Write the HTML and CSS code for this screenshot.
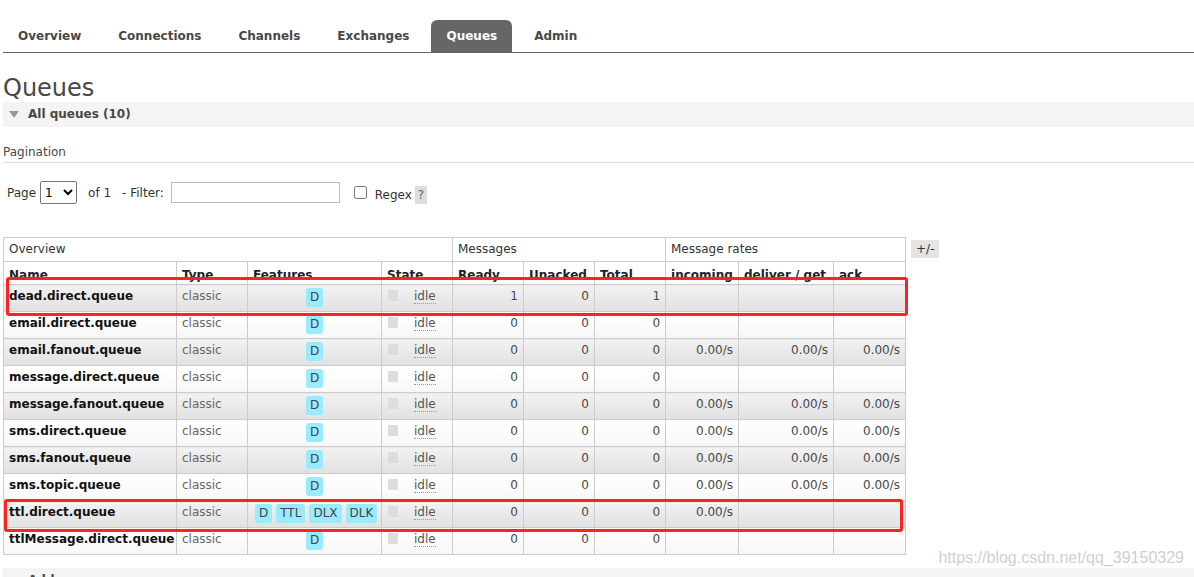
FILE: index.html
```html
<!DOCTYPE html>
<html>
<head>
<meta charset="utf-8">
<link rel="stylesheet" href="styles.css">
</head>
<body>
<div class="page">
  <ul class="tabs">
    <li class="tab">Overview</li>
    <li class="tab">Connections</li>
    <li class="tab">Channels</li>
    <li class="tab">Exchanges</li>
    <li class="tab active">Queues</li>
    <li class="tab">Admin</li>
  </ul>
  <h1 class="title">Queues</h1>
  <div class="section-head"><span class="tri"></span>All queues (10)</div>
  <div class="pag-title">Pagination</div>
  <div class="controls">
    <span class="lbl">Page</span>
    <select class="pg"><option>1</option></select>
    <span class="lbl of">of 1</span>
    <span class="lbl">- Filter:</span>
    <input class="filter" type="text">
    <input class="chk" type="checkbox">
    <span class="lbl regex">Regex</span>
    <span class="help">?</span>
  </div>
  <div class="table-row">
    <div class="table-wrap">
      <table class="queues">
        <colgroup>
          <col style="width:173px"><col style="width:71px"><col style="width:134px"><col style="width:71px">
          <col style="width:71px"><col style="width:71px"><col style="width:71px">
          <col style="width:73px"><col style="width:95px"><col style="width:72px">
        </colgroup>
        <thead>
          <tr class="group">
            <th colspan="4">Overview</th>
            <th colspan="3">Messages</th>
            <th colspan="3">Message rates</th>
          </tr>
          <tr class="cols">
            <th><div class="cut">Name</div></th>
            <th><div class="cut">Type</div></th>
            <th><div class="cut">Features</div></th>
            <th><div class="cut">State</div></th>
            <th><div class="cut">Ready</div></th>
            <th><div class="cut">Unacked</div></th>
            <th><div class="cut">Total</div></th>
            <th><div class="cut">incoming</div></th>
            <th><div class="cut">deliver / get</div></th>
            <th><div class="cut">ack</div></th>
          </tr>
        </thead>
        <tbody>
          <tr class="odd"><td class="name">dead.direct.queue</td><td class="type">classic</td><td class="feat"><span class="badge">D</span></td><td class="state"><span class="sq"></span><span class="idle">idle</span></td><td class="num">1</td><td class="num">0</td><td class="num">1</td><td class="num"></td><td class="num"></td><td class="num"></td></tr>
          <tr class="even"><td class="name">email.direct.queue</td><td class="type">classic</td><td class="feat"><span class="badge">D</span></td><td class="state"><span class="sq"></span><span class="idle">idle</span></td><td class="num">0</td><td class="num">0</td><td class="num">0</td><td class="num"></td><td class="num"></td><td class="num"></td></tr>
          <tr class="odd"><td class="name">email.fanout.queue</td><td class="type">classic</td><td class="feat"><span class="badge">D</span></td><td class="state"><span class="sq"></span><span class="idle">idle</span></td><td class="num">0</td><td class="num">0</td><td class="num">0</td><td class="num">0.00/s</td><td class="num">0.00/s</td><td class="num">0.00/s</td></tr>
          <tr class="even"><td class="name">message.direct.queue</td><td class="type">classic</td><td class="feat"><span class="badge">D</span></td><td class="state"><span class="sq"></span><span class="idle">idle</span></td><td class="num">0</td><td class="num">0</td><td class="num">0</td><td class="num"></td><td class="num"></td><td class="num"></td></tr>
          <tr class="odd"><td class="name">message.fanout.queue</td><td class="type">classic</td><td class="feat"><span class="badge">D</span></td><td class="state"><span class="sq"></span><span class="idle">idle</span></td><td class="num">0</td><td class="num">0</td><td class="num">0</td><td class="num">0.00/s</td><td class="num">0.00/s</td><td class="num">0.00/s</td></tr>
          <tr class="even"><td class="name">sms.direct.queue</td><td class="type">classic</td><td class="feat"><span class="badge">D</span></td><td class="state"><span class="sq"></span><span class="idle">idle</span></td><td class="num">0</td><td class="num">0</td><td class="num">0</td><td class="num">0.00/s</td><td class="num">0.00/s</td><td class="num">0.00/s</td></tr>
          <tr class="odd"><td class="name">sms.fanout.queue</td><td class="type">classic</td><td class="feat"><span class="badge">D</span></td><td class="state"><span class="sq"></span><span class="idle">idle</span></td><td class="num">0</td><td class="num">0</td><td class="num">0</td><td class="num">0.00/s</td><td class="num">0.00/s</td><td class="num">0.00/s</td></tr>
          <tr class="even"><td class="name">sms.topic.queue</td><td class="type">classic</td><td class="feat"><span class="badge">D</span></td><td class="state"><span class="sq"></span><span class="idle">idle</span></td><td class="num">0</td><td class="num">0</td><td class="num">0</td><td class="num">0.00/s</td><td class="num">0.00/s</td><td class="num">0.00/s</td></tr>
          <tr class="odd"><td class="name">ttl.direct.queue</td><td class="type">classic</td><td class="feat"><span class="badge">D</span><span class="badge">TTL</span><span class="badge">DLX</span><span class="badge">DLK</span></td><td class="state"><span class="sq"></span><span class="idle">idle</span></td><td class="num">0</td><td class="num">0</td><td class="num">0</td><td class="num">0.00/s</td><td class="num"></td><td class="num"></td></tr>
          <tr class="even"><td class="name">ttlMessage.direct.queue</td><td class="type">classic</td><td class="feat"><span class="badge">D</span></td><td class="state"><span class="sq"></span><span class="idle">idle</span></td><td class="num">0</td><td class="num">0</td><td class="num">0</td><td class="num"></td><td class="num"></td><td class="num"></td></tr>
        </tbody>
      </table>
      <div class="mark mark1"></div>
      <div class="mark mark2"></div>
    </div>
    <span class="toggle">+/-</span>
  </div>
  <div class="section-head add"><span class="tri"></span>Add a new queue</div>
  <div class="watermark">https://blog.csdn.net/qq_39150329</div>
</div>
</body>
</html>
```
FILE: styles.css
```css
html, body {
  margin: 0;
  padding: 0;
  background: #fff;
}
body {
  font-family: "DejaVu Sans", Verdana, sans-serif;
  font-size: 12px;
  color: #484848;
  overflow: hidden;
}
.page {
  position: relative;
  padding-left: 3px;
  height: 577px;
}
.tabs {
  list-style: none;
  margin: 0;
  padding: 20px 0 0 0;
  display: flex;
  gap: 7px;
  border-bottom: 1px solid #666;
}
.tab {
  height: 32px;
  line-height: 33px;
  padding: 0 15px;
  font-weight: bold;
  font-size: 12px;
  color: #484848;
  border-radius: 6px 6px 0 0;
}
.tab.active {
  background: #666;
  color: #fff;
}
.title {
  margin: 21px 0 0 0;
  font-size: 24px;
  line-height: 28px;
  font-weight: normal;
  color: #484848;
}
.section-head {
  height: 25px;
  line-height: 25px;
  background: #f4f4f4;
  font-weight: bold;
  font-size: 12px;
  color: #484848;
  display: flex;
  align-items: center;
}
.tri {
  width: 0;
  height: 0;
  border-left: 5px solid transparent;
  border-right: 5px solid transparent;
  border-top: 7px solid #999;
  margin: 0 9px 0 6px;
}
.pag-title {
  margin-top: 17px;
  line-height: 16px;
  padding-bottom: 2px;
  border-bottom: 1px solid #ddd;
  color: #484848;
}
.controls {
  margin-top: 18px;
  height: 23px;
  display: flex;
  align-items: center;
  padding-left: 4px;
}
.lbl { color: #333; }
.pg {
  margin-left: 4px;
  width: 37px;
  height: 23px;
  font-family: inherit;
  font-size: 12px;
  border: 1px solid #767676;
  border-radius: 2px;
  background: #fff;
  color: #000;
}
.of { margin-left: 11px; margin-right: 11px; }
.filter {
  margin-left: 7px;
  width: 169px;
  height: 21px;
  box-sizing: border-box;
  border: 1px solid #bbb;
  padding: 0;
}
.chk {
  margin: 0 0 0 14px;
  width: 13px;
  height: 13px;
}
.regex { margin-left: 8px; margin-top: 4px; }
.help {
  margin-left: 3px;
  margin-top: 4px;
  background: #ddd;
  color: #666;
  padding: 1px 3px;
  line-height: 16px;
}
.table-row {
  margin-top: 33px;
  display: flex;
  align-items: flex-start;
  gap: 5px;
}
.table-wrap {
  position: relative;
}
.queues {
  border-collapse: collapse;
  table-layout: fixed;
  width: 902px;
}
.queues th, .queues td {
  border: 1px solid #ccc;
  padding: 0 5px;
  text-align: left;
  vertical-align: top;
  overflow: hidden;
  white-space: nowrap;
}
.group th {
  height: 23px;
  line-height: 23px;
  font-weight: normal;
  color: #333;
}
.cols th {
  height: 22px;
  font-weight: bold;
  color: #222;
}
.cut {
  height: 15px;
  overflow: hidden;
  padding-top: 5px;
  line-height: 16px;
}
.queues tbody td {
  height: 27px;
  box-sizing: border-box;
  padding-top: 3px;
  line-height: 16px;
}
tr.odd td {
  background: linear-gradient(#f2f2f2, #e1e1e1);
}
tr.even td {
  background: linear-gradient(#fff, #f7f7f7);
}
td.name {
  font-weight: bold;
  color: #111;
}
td.type { color: #666; }
td.feat {
  text-align: center;
  padding-top: 3px;
}
.badge {
  display: inline-block;
  background: #99ebff;
  color: #444;
  border-radius: 3px;
  padding: 0 4px;
  line-height: 19px;
  font-size: 12px;
  margin: 0 2px;
}
td.state {
  padding-top: 3px;
}
.sq {
  display: inline-block;
  width: 10px;
  height: 11px;
  background: #ddd;
  vertical-align: -1px;
  margin: 0 16px 0 1px;
}
.idle {
  border-bottom: 1px dotted #999;
  color: #555;
}
td.num {
  text-align: right;
  color: #484848;
}
.mark {
  position: absolute;
  border: 3px solid #f22;
  border-radius: 3px;
  box-sizing: border-box;
}
.mark1 {
  left: 3px;
  top: 40px;
  width: 902px;
  height: 39px;
}
.mark2 {
  left: 1px;
  top: 262px;
  width: 899px;
  height: 33px;
}
.toggle {
  margin-top: 3px;
  background: #e4e4e4;
  color: #333;
  padding: 0 5px;
  line-height: 18px;
}
.add {
  margin-top: 13px;
}
.watermark {
  position: absolute;
  right: 10px;
  top: 548px;
  font-family: "Liberation Sans", Arial, sans-serif;
  font-size: 16px;
  color: #cfcfcf;
  line-height: 20px;
}
```
